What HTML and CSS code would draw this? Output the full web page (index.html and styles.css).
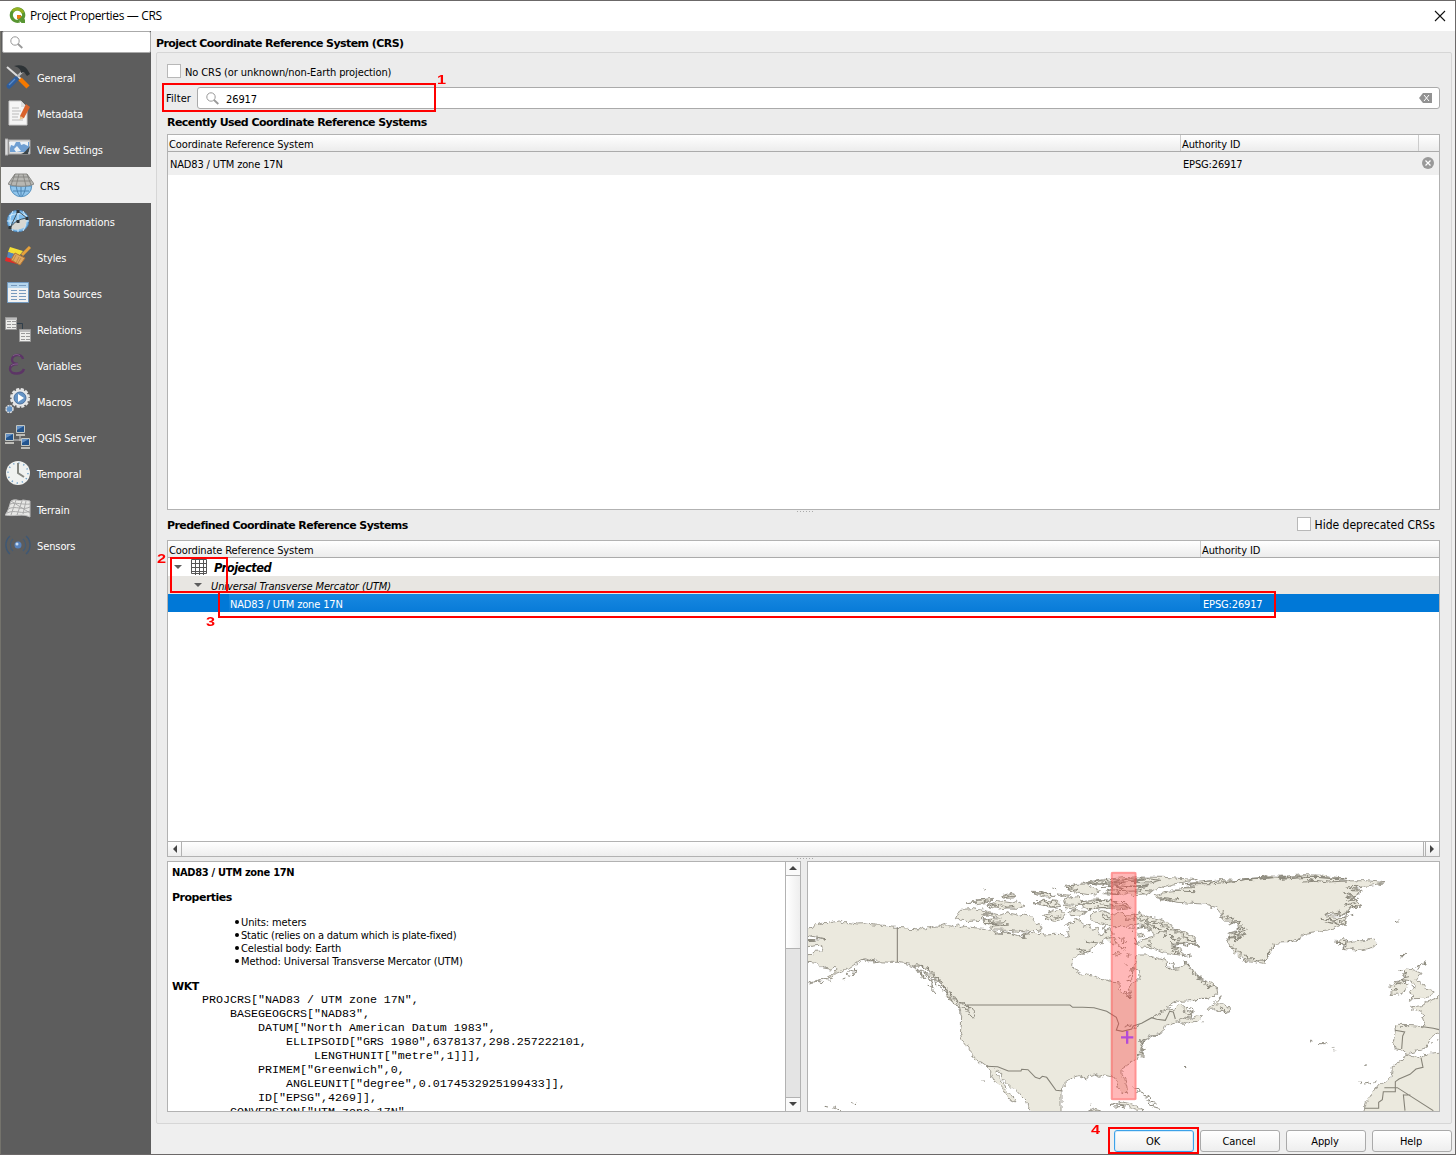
FILE: index.html
```html
<!DOCTYPE html>
<html lang="en">
<head>
<meta charset="utf-8">
<title>Project Properties — CRS</title>
<link rel="stylesheet" href="styles.css">
</head>
<body>
<div class="window">
  <header class="titlebar">
    <svg class="logo" width="17" height="17" viewBox="0 0 17 17"><path d="M13.7 11.5A6.2 6.2 0 1 0 10.5 14" fill="none" stroke="#589632" stroke-width="3.2"/><path d="M3.500 4A6.2 6.2 0 0 1 13.9 6" fill="none" stroke="#93b023" stroke-width="2.8"/><path d="M8 8h3.5l4.5 4.6V16h-3.4L8 11.4z" fill="#589632"/><path d="M8 8h3l1.6 1.8-3 2.5L8 11z" fill="#ee7913"/></svg>
    <span class="caption">Project Properties — CRS</span>
    <svg class="close" width="12" height="12" viewBox="0 0 12 12"><path d="M1 1l10 10M11 1L1 11" stroke="#111" stroke-width="1.1"/></svg>
  </header>
  <div class="body">
    <nav class="sidebar">
      <div class="search"><svg width="13" height="13" viewBox="0 0 13 13" fill="none" stroke="#999"><circle cx="5" cy="5" r="4.2"/><path d="M8 8l4.3 4" stroke-width="1.8"/></svg></div>
      <div class="item"><svg class="ico" viewBox="0 0 26 26"><path d="M2 3l15 13" stroke="#ddd" stroke-width="2"/><path d="M18 7L9 16" stroke="#bbb" stroke-width="2.4"/><path d="M11 15l-7 7" stroke="#2f5d9b" stroke-width="5" stroke-linecap="round"/><path d="M10 15l-6 6" stroke="#5b8cc9" stroke-width="1.300"/><path d="M15 15l8 8" stroke="#f57900" stroke-width="4.5"/><path d="M9 2c6-2 11 0 13 3l3 5-3 2-3-4-3 1c0-4-3-6-7-7z" fill="#2d3336"/></svg><span>General</span></div>
      <div class="item"><svg class="ico" viewBox="0 0 26 26"><path d="M4 1h12l6 6v18H4z" fill="#f5f5f5" stroke="#ccc"/><path d="M16 1v6h5" fill="#ddd"/><path d="M7 8h7M7 11h9M7 14h7M7 17h6M7 20h11" stroke="#bbb"/><path d="M15 16l6-12 4 3-6 11-4 1z" fill="#d9622b"/><path d="M14.500 20l1-4 3 2z" fill="#eac68f"/></svg><span>Metadata</span></div>
      <div class="item"><svg class="ico" viewBox="0 0 26 26"><path d="M0 3h3v16H0zM4 4h21v14H4z" fill="#ddd" stroke="#aaa"/><path d="M5 6h19v10H5z" fill="#6f9fd2"/><path d="M4 6h7l-2 4-3-1-1 3zM9 13l3-3 4 5-5 1zM15 6h8v4l-4-2-3 1z" fill="#edf3f8"/><path d="M25 10l-2 8h-7c4-1 6-5 9-8z" fill="#3d4548"/></svg><span>View Settings</span></div>
      <div class="item active"><svg class="ico" viewBox="0 0 26 26"><circle cx="13" cy="14" r="10.7" fill="#8fc5ed" stroke="#5590bd"/><path d="M3 14h20M5 19h16M13 14v10M8 13c1 6 2 9 4 11M18 13c-1 6-2 9-4 11" stroke="#4c83b0" fill="none"/><path d="M7 2h12l7 10c-5 3-20 3-26 0z" fill="#b7b7b3" stroke="#8b8b88"/><path d="M5 5h16M3 9h20M11 2l-3 12M15 2l3 12M7 2L3 13M19 2l4 11" stroke="#7f7f7b" stroke-width=".8" fill="none"/></svg><span>CRS</span></div>
      <div class="item"><svg class="ico" viewBox="0 0 26 26"><circle cx="13" cy="13" r="10.800" fill="#7fbdec" stroke="#4b81b3"/><path d="M4 8c6-3 12-3 18 0M2 13h22M13 2v22M8 3c-4 7-4 13 0 20M18 3c4 7 4 13 0 20" stroke="#d5ecfb" fill="none"/><path d="M5 20C9 14 14 11 22 11l-2 8c-5 3-10 4-15 1z" fill="#d7d7d2"/><path d="M5 20C9 14 14 11 22 10M13 3L5 20M13 3l9 7" stroke="#30373b" stroke-width=".8" fill="none"/><path d="M11.500 2h3v3h-3zM20.500 9h3v3h-3zM3.500 18h3v3h-3zM11.500 12h3v3h-3z" fill="#30373b"/></svg><span>Transformations</span></div>
      <div class="item"><svg class="ico" viewBox="0 0 26 26"><path d="M5 3l13 4-4 5L3 8z" fill="#f5df35"/><path d="M3 8l10 3-3 6-8-3z" fill="#5585bc"/><path d="M1 13l9 3 2 4-12-3z" fill="#e52828"/><path d="M10 9l10 5-5 7-9-5z" fill="#dfa860" stroke="#b37635"/><path d="M17 11l8-8" stroke="#e6a13b" stroke-width="3"/><path d="M11 11l-3 6M14 13l-3 6M16 14l-3 5" stroke="#b98044" stroke-width=".8"/></svg><span>Styles</span></div>
      <div class="item"><svg class="ico" viewBox="0 0 26 26"><path d="M2.500 2.500h21v20h-21z" fill="#f1f1f1" stroke="#739ac0"/><path d="M3 3h20v5H3z" fill="#b5d5ed"/><path d="M6 5.500h6M14 5.500h7M6 10.500h6M14 10.500h7M6 13.500h6M14 13.500h7M6 16.500h6M14 16.500h7M6 19.500h6M14 19.500h7" stroke="#7699bd"/></svg><span>Data Sources</span></div>
      <div class="item"><svg class="ico" viewBox="0 0 26 26"><path d="M12 7.500h5.500V14" fill="none" stroke="#303f4b"/><path d="M.5 1.500h11v12H.5zM14.500 13.500h11v12h-11z" fill="#ededeb" stroke="#999"/><path d="M1 3h11M15 15h10" stroke="#bbb" stroke-width="2"/><path d="M2 5.500h4M7 5.500h4M2 8.500h4M7 8.500h4M2 11.500h4M7 11.500h4M16 17.500h4M21 17.500h4M16 20.500h4M21 20.500h4M16 23.500h4M21 23.500h4" stroke="#999"/></svg><span>Relations</span></div>
      <div class="item"><svg class="ico" viewBox="0 0 26 26"><path d="M18 7c-1-6-11-5-11 1 0 3 3 4 6 4-5 0-8 2-8 5 0 6 12 6 14 0" fill="none" stroke="#5c3566" stroke-width="2.4"/><path d="M8 4c2-2 5-2 7 0M6 14c2-2 4-2 7-2" fill="none" stroke="#8b6a93" stroke-width=".8"/></svg><span>Variables</span></div>
      <div class="item"><svg class="ico" viewBox="0 0 26 26"><circle cx="15" cy="10" r="8.500" fill="#eee" stroke="#e5e5e5" stroke-width="3" stroke-dasharray="3 1.500"/><circle cx="15" cy="10" r="6" fill="#6594c6" stroke="#4a6f9c"/><path d="M13 6l6 4-6 4z" fill="#fff"/><circle cx="4.500" cy="21" r="3.500" fill="#6594c6" stroke="#ddd" stroke-width="1.500" stroke-dasharray="2 .8"/></svg><span>Macros</span></div>
      <div class="item"><svg class="ico" viewBox="0 0 26 26"><path d="M15 10v7M8 16h10" stroke="#ccc"/><g fill="#23558f" stroke="#c3c7c3"><path d="M11.500 1.500h8v7h-8zM.5 9.500h8v7h-8zM16.500 14.500h8v7h-8z"/></g><path d="M12 2h7l-7 4zM1 10h7l-7 4zM17 15h7l-7 4z" fill="#6591c5"/><path d="M11 11h9M0 19h9M16 24h9" stroke="#bdbdb8" stroke-width="2"/></svg><span>QGIS Server</span></div>
      <div class="item"><svg class="ico" viewBox="0 0 26 26"><circle cx="13" cy="13" r="12" fill="#f0f2f0"/><circle cx="13" cy="13" r="10" fill="none" stroke="#6fa0c8" stroke-width="1.500" stroke-dasharray="1.300 3.936"/><path d="M13 3v10l6 4" fill="none" stroke="#858781" stroke-width="2"/></svg><span>Temporal</span></div>
      <div class="item"><svg class="ico" viewBox="0 0 26 26"><path d="M6 5c5-3 8 1 12-1l7 1v16c-8-4-15 0-25-2 4-5 4-9 6-14z" fill="#e7e7e5" stroke="#bbb"/><path d="M3 13c8-4 14 2 22-2M2 17c8-4 15 2 23-2M5 8c6-2 13 1 20 0M11 4L6 19M17 5l-5 14M21 5l-3 13M6 5l19 12" fill="none" stroke="#aaa"/></svg><span>Terrain</span></div>
      <div class="item"><svg class="ico" viewBox="0 0 26 26"><circle cx="13" cy="13" r="3.500" fill="#5682bd"/><circle cx="12" cy="12" r="1.500" fill="#c5daf0"/><path d="M8 7a8 8 0 0 0 0 12M18 7a8 8 0 0 1 0 12" fill="none" stroke="#445c75" stroke-width="1.300"/><path d="M5 4a12 12 0 0 0 0 18M21 4a12 12 0 0 1 0 18" fill="none" stroke="#3f5874" stroke-width="1.500"/></svg><span>Sensors</span></div>
    </nav>
    <main class="content">
      <h1 class="heading page-title"><span>Project Coordinate Reference System (CRS)</span></h1>
      <section class="group">
        <label class="check"><i class="box"></i><span class="t-nocrs">No CRS (or unknown/non-Earth projection)</span></label>
        <div class="filter">
          <span class="t-filter">Filter</span>
          <div class="input"><svg width="13" height="13" viewBox="0 0 13 13" fill="none" stroke="#999"><circle cx="5" cy="5" r="4.200"/><path d="M8 8l4.300 4" stroke-width="1.800"/></svg><span class="t-num">26917</span><svg class="clear" width="13" height="10" viewBox="0 0 13 10"><path d="M0 5l4-5h9v10H4z" fill="#929292"/><path d="M5 2l5 6M10 2L5 8" stroke="#fff"/></svg></div>
        </div>
        <h2 class="heading recent"><span>Recently Used Coordinate Reference Systems</span></h2>
        <div class="table recent-table">
          <div class="thead"><div><span>Coordinate Reference System</span></div><div><span>Authority ID</span></div><div></div></div>
          <div class="trow"><div><span class="t-nad">NAD83 / UTM zone 17N</span></div><div><span class="t-epsg">EPSG:26917</span></div><div class="remove"><svg width="12" height="12" viewBox="0 0 12 12"><circle cx="6" cy="6" r="6" fill="#999"/><path d="M3.500 3.500l5 5m0-5l-5 5" stroke="#fff" stroke-width="1.200"/></svg></div></div>
        </div>
        <div class="grip"></div>
        <div class="predef"><h2 class="heading"><span>Predefined Coordinate Reference Systems</span></h2><label class="check"><i class="box"></i><span>Hide deprecated CRSs</span></label></div>
        <div class="table tree">
          <div class="thead"><div><span>Coordinate Reference System</span></div><div><span>Authority ID</span></div></div>
          <div class="node projected"><i class="arrow"></i><svg width="16" height="16" viewBox="0 0 16 16"><path d="M.5 .5h15v14H.5zM4.500 0v16M8.500 0v16M12.500 0v16M0 4.500h16M0 8.500h16M0 12.500h16" fill="none" stroke="#555"/></svg><b class="t-proj">Projected</b></div>
          <div class="node utm"><i class="arrow"></i><em>Universal Transverse Mercator (UTM)</em></div>
          <div class="node selected"><div><span class="t-nad">NAD83 / UTM zone 17N</span></div><div><span class="t-epsg">EPSG:26917</span></div></div>
          <div class="blank"></div>
          <div class="hscroll"><span><i class="left"></i></span><span><i class="right"></i></span></div>
        </div>
        <div class="grip low"></div>
        <div class="details">
          <div class="info">
            <div class="doc">
              <h3 class="crs-name"><span>NAD83 / UTM zone 17N</span></h3>
              <h3><span>Properties</span></h3>
              <ul><li><span>Units: meters</span></li><li><span class="t-static">Static (relies on a datum which is plate-fixed)</span></li><li><span>Celestial body: Earth</span></li><li><span>Method: Universal Transverse Mercator (UTM)</span></li></ul>
              <h3><span>WKT</span></h3>
<pre>PROJCRS["NAD83 / UTM zone 17N",
    BASEGEOGCRS["NAD83",
        DATUM["North American Datum 1983",
            ELLIPSOID["GRS 1980",6378137,298.257222101,
                LENGTHUNIT["metre",1]]],
        PRIMEM["Greenwich",0,
            ANGLEUNIT["degree",0.0174532925199433]],
        ID["EPSG",4269]],
    CONVERSION["UTM zone 17N",</pre>
            </div>
            <div class="vscroll"><span><i class="up"></i></span><b></b><span><i class="down"></i></span></div>
          </div>
          <svg class="map" viewBox="24 21 1893 747" preserveAspectRatio="none">
            <defs><filter id="rugged" x="0" y="0" width="1940" height="790" filterUnits="userSpaceOnUse"><feTurbulence type="fractalNoise" baseFrequency=".07" numOctaves="2" seed="4"/><feDisplacementMap in="SourceGraphic" scale="17" xChannelSelector="R" yChannelSelector="G"/></filter></defs>
            <g filter="url(#rugged)">
            <g class="land">
              <path d="M4 225L38 220 45 210 65 205 85 206 104 200 118 198 126 203 150 203 172 207 196 206 220 210 250 211 275 216 292 217 320 219 330 224 345 223 352 229 360 218 375 222 385 215 395 219 408 213 422 214 440 207 450 217 458 211 461 219 476 207 480 218 494 214 520 218 550 220 577 227 588 232 582 238 610 235 640 236 655 242 672 248 668 235 690 232 710 236 725 235 735 240 765 238 788 239 797 247 808 244 800 230 808 220 800 207 818 202 829 191 848 202 850 214 868 208 874 226 890 220 902 243 918 226 932 220 940 235 925 248 910 250 906 262 892 269 877 280 865 291 848 296 829 303 817 318 815 331 824 341 835 346 839 361 862 357 882 362 905 373 932 379 957 380 958 403 968 414 978 419 985 429 993 416 987 400 990 384 1010 378 1020 366 1019 350 1001 343 1005 325 1008 300 1040 300 1065 308 1082 313 1098 316 1100 335 1118 345 1139 340 1155 321 1170 335 1182 348 1192 366 1208 374 1222 380 1237 387 1251 403 1253 415 1240 424 1210 431 1162 438 1132 439 1100 460 1060 485 1090 464 1122 460 1147 447 1160 457 1149 472 1167 473 1177 485 1157 489 1140 498 1118 504 1095 511 1092 524 1078 536 1060 539 1045 544 1031 558 1017 553 1024 563 1019 574 1031 583 1023 590 1033 603 1016 602 1011 615 984 629 966 642 966 658 975 674 981 696 980 715 969 716 955 699 949 680 943 667 927 663 913 660 900 664 883 657 868 662 860 672 838 662 818 668 800 681 787 693 783 710 783 788H698L680 740 665 725 650 708 630 695 615 680 602 665 602 652 588 642 590 660 603 673 612 689 622 709 632 724 642 728 648 742 631 734 619 720 607 698 592 686 582 679 570 654 558 631 545 622 525 613 518 595 505 581 488 560 481 536 484 510 485 483 478 454 448 434 440 425 444 411 432 398 420 383 406 372 395 362 381 344 366 333 343 334 324 327 292 322 270 322 242 320 225 314 213 318 196 311 181 315 164 327 148 338 130 346 111 354 94 367 70 373 48 380 4 388L50 377 80 369 101 357 111 344 102 337 90 342 70 339 60 334 50 325 31 323 4 318V300L39 298 45 289 66 288 70 278 60 271 4 277V257L49 256 75 251 45 246 4 238Z"/>
              <path d="M481 163L518 161 549 166 580 173 551 183 540 196 503 200 466 191ZM544 177L575 174 597 180 624 174 656 181 674 177 696 184 708 205 730 219 716 227 694 226 667 230 625 226 582 225 568 213 558 208 549 197 575 191 601 192 580 183Z"/>
              <path d="M498 144L536 136 578 130 566 142 530 146ZM560 150L592 137 638 144 650 139 675 153 657 160 621 159 599 162 570 156ZM605 122L637 115 650 121 640 129 616 130ZM694 109L724 110 768 124 736 126ZM708 145L734 136 776 139 783 154 756 157ZM774 117L812 121 804 127ZM795 94L831 88 859 87 898 107 887 120 849 117 823 112ZM849 82L937 71 1000 66 1094 67 1192 74 1134 84 1083 97 1052 110 1038 120 995 122 983 115 965 121 917 112 940 98 924 92 955 86 900 88ZM792 132L832 125 846 137 884 132 945 137 942 145 982 149 990 158 946 163 902 157 867 164 844 154 857 149 797 147ZM731 181L757 169 777 163 796 178 787 193 761 199 738 190ZM802 178L818 166 862 170 842 180 813 182ZM790 150L829 155 825 163 796 158ZM870 187L879 173 907 167 937 178 954 171 984 181 1019 174 1041 184 1076 192 1108 206 1122 222 1154 231 1189 250 1184 266 1157 265 1110 268 1136 280 1155 295 1144 302 1096 292 1060 279 1022 275 1006 265 1026 255 1056 247 1067 236 1049 228 1034 215 1011 207 978 215 938 215 908 205 880 201ZM917 248L928 260 948 268 976 285 961 273 945 258 937 244ZM938 296L955 289 964 296 947 303Z"/>
              <path d="M1065 122L1095 113 1139 108 1150 98 1181 93 1164 85 1211 80 1264 74 1327 77 1344 70 1378 69 1402 63 1456 64 1510 59 1572 61 1640 71 1607 78 1696 77 1755 83 1704 93 1668 96 1670 107 1683 111 1667 120 1660 133 1674 143 1682 156 1650 158 1640 173 1624 181 1573 178 1587 185 1632 188 1640 205 1620 211 1601 222 1520 234 1497 250 1460 263 1429 264 1411 291 1394 325 1367 320 1337 316 1312 299 1291 278 1281 250 1294 237 1316 232 1314 209 1297 199 1272 198 1267 181 1247 157 1214 147 1176 145 1131 142 1097 133 1068 128Z"/>
              <path d="M1607 259L1628 253 1642 262 1671 256 1681 257 1700 257 1714 250 1724 259 1731 267 1718 277 1696 282 1672 287 1648 282 1627 280 1640 270ZM1769 392L1779 387 1782 380 1807 378 1823 391 1817 406 1796 417 1770 419 1777 405ZM1803 376L1817 365 1807 354 1818 342 1839 344 1863 355 1848 374 1868 388 1877 403 1902 407 1898 422 1873 430 1839 431 1825 437 1842 420 1829 414 1838 401 1850 393 1839 384 1828 377 1812 374ZM1937 420L1896 433 1880 442 1865 452 1836 455 1835 461 1859 468 1870 483 1875 501 1869 515 1836 512 1795 511 1785 515 1786 530 1780 562 1786 582 1803 584 1820 597 1850 588 1871 583 1885 564 1894 546 1937 520ZM1937 589L1880 596 1863 608 1836 604 1820 597 1809 616 1791 624 1777 637 1774 664 1757 681 1736 688 1724 705 1710 727 1699 742 1685 787H1937Z"/>
              <path d="M1268 417L1256 430 1247 441 1219 464 1239 462 1256 471 1271 464 1275 475 1289 469 1287 455 1268 446 1250 447 1257 433ZM1138 498L1156 487 1175 490 1192 480 1210 483 1188 499 1160 505 1147 511ZM930 752L966 741 1002 748 1031 767 1005 765 981 751 949 747ZM866 767L880 760 902 765ZM1148 456L1156 477 1172 478 1175 472 1154 459ZM1010 237L1034 234 1037 244 1017 246Z"/>
            </g>
            <g class="coast">
              <path d="M24 257l20-2 10-7 21 3-9 5M341 334l8-5 15 2 9 9 10-2 5 11 10 4 5 14 13 1-1 8 9 5-3 9 13 2-2 8 12 3-6 9 14 2-1 9 13 4 7 14 12 2 2 8 12-3 5 9 13 2 10 17-5 10-10-3-3-16-12-8-12 1-8-12-15-3-3-14-12-6-10-20-9 2-4-12-12-5-3-13-10-3-11-17-12-1-4-8-10 1zM347 345l12 5 8 16 7 1M372 353l13 11 2 10 10 4M383 391l9 2 3 9 10 12M444 431l21 2 11 11 15-1 13 16-4 10M139 359l10-12 10 4 8-8-2 12-12 7zM170 329l12-7 5-10 17 6 9-4 8 10 14-3"/>
              <path d="M501 144l30-1-7-8 38-2-14 8 18-4M565 151l15-5 11 11 13-9 14 9 25-3M572 145l12 2M608 125l17-6 15 5M567 155l20-6-10-6 15 6M611 129l21-5 14 0M695 112l35 4-8-7 41 13M699 143l21 1 10-8 15 8 12-6 15 8-15 8-12-7-15 5M736 147l9 9 13-3 14 3M797 97l20 3-7-8 13 0-3 14 14-4M857 84l42 3 55-6 22 3-8-9 24-4 37 4M860 85l40-8 25 3-11-7 46 2-23 7 75-2M990 78l44-3-20-8 68 9-30 8-65-2M920 106l52-3-24-8 92-2-34 12 50 3M907 98l55-8 40 4 44-5-30 6M911 116l50 3-11-9 52-2 35 10M867 161l63-5 52-1M839 140l66-4 72 4M842 147l45-2 57 7M906 181l6 12 9 4 8-3-6-14zM740 188l15-6 14 6 15-5M553 206l40-1-18 8 51-3-46-5M548 193l35 9 37-2M582 235l39-4 24 8M653 237l10 9 4-9 9 13-4-14 17 2"/>
              <path d="M971 178l12 14-8 4 24-1 7-17 7 15 14-10-5 16 24-8-7 10 30-3-11 8 32-2-9 8 27 1-7 10 31 3-9 8 25-1-2 12 21 3-8 9 31-1-14 9 21 8-29-6-10 8-6-11-22 1 12-13-31-2 11-8-27-1 8-11-29 1 10-10-26-1 8-8-25 1 4-10-16 5M1010 219l25-6 14 8-5 9M1026 237l6 9-10-3M1048 254l10 12-17 1 14 9M1110 262l18 11-14 4 20 4-16 7 21 3-11 5 30 0-12 10 27-6M951 243l10 13 12-5-3 12 14-3M986 219l10 12 4-16M829 282l29 4-23 7M855 259l40 5M849 298l17-9 14 3M1005 247l7 15M921 235l-10-13 2-9"/>
              <path d="M980 298l6-1 2 7-6 2M977 329l5 2M991 349l8-10-2 19M984 367l8-6 6 7-8 5M982 378l12-3M969 411l10-4 1 12 8-8-2 18 7-7M978 427l18-4M1151 320l10 12 7-1 0 10 12 1-3 13 14 7-1 8 18 2-3 8 13-1-4 13 13-3 2 10 19-8 5 12M1107 326l11-7 3 21 12-2M1098 335l12 2-3 7"/>
              <path d="M1160 456l17 4 3 14-12 4M1175 438l33-8 20 2M1256 470l6-14 8 13 6-10-3 15M1017 559l18-6-13 14 14-7-15 15 9-2-5 13 12-3M1011 599l20-3-17-7M1030 558l15-8 11-7 18-2 13-8"/>
              <path d="M1072 125l43 6-33 4 55-4-20 11M1120 108l66 2M1136 99l48-1M1155 86l83 0 68-6M1210 80l52-5 15 5 80-8-31 0 90-5-38 5 92-9-31 8 116-5-60 0M1336 72l120-6-8 7 82-8M1443 64l197 6-44 1-69-6M1509 81l35-2-20-5 62 7 62-4M1637 96l53-3M1641 100l36 2-22 5 32 2M1630 112l28 8-21 8 31-4-19 10 28-5M1639 137l24-6 4 11-34 8 37 2-18 7 29-4M1571 178l49-7-9 11 33-10-15 16 31-10M1565 190l48 7-31-6 33 16-41-7 46 10 19-9-28-6M1270 165l-2 11-10 2 8 11 23-11-9 14 21-2-8 12 29-3-12 12 20-2-17 13 22-3-23 13 24-6-18 14 22-4-32 13 17-2-23 10 15-1M1281 210l14-7 20 2M1280 236l30-8-6 15 14-4-35 10 33-2M1288 272l13 1-6 8 17-3-3 13 14-1 0 12 16-2 1 12 18-1 10 9 22-6 4 7 12-20-1-13 15-10-1-12"/>
              <path d="M1460 264l15-8 10 6 13-10M1608 262l18 1-11 7 29-7-14-7 15-2-8 9M1630 269l8 13M1800 300l14-2-8 9zM1788 200l10-3M1797 349l13-7 3 8-8 8 14-3-6 13 14-3M1848 337l14-7-9 14M1865 326l10-11-2 13zM1782 391l14-7 6-8 16 1-5 10M1770 404l20-1-10 8M1835 390l9 8M1787 383l22 5"/>
              <path d="M153 743l5 1M168 743l-3 5M74 754l10 2M98 758l9 3 14 6M128 372l8-3M53 380l15 3M80 377l12 3M360 357l12 5-3 8 13 0 2 8 14 3-5 10 12 8M1530 554l4 5M1557 566l17 0M1577 563l6 4M1594 575l6 2M1601 583l3 3M1690 632l10-3M1680 679l4 9M1692 684l14-2M1704 681l9 6M1722 687l7-10M1894 563l5 1M1911 556l4-3M872 748l2 3M1152 637l4 1M1207 506l4-3M1001 698l19 4-7 8 20 4-3 9 19 5-2 8 17 6M1039 733l11 16 17-2M1055 755l25 5M942 756l31-2-7 7 12-5M535 620l3 5M546 622l-4 4M548 674l4 2M550 102l5 1M757 99l10 2M1004 520l15-10M974 516l20-7"/>
            </g>
            </g>
            <path class="border" d="M292 217V322M500 450H810L818 457 848 457 882 458 920 469 949 487 956 506 949 525 967 529 995 522 1000 513 1025 505 1055 488 1070 493 1096 496 1109 469 1120 471 1126 492M558 634L593 635 625 648 663 648 665 643 684 644 706 667 719 671 727 664 740 667 768 706 788 708M1869 515L1900 520 1917 524M1785 526L1814 531 1808 543 1805 582M1863 608L1869 637 1848 642 1830 658 1797 672 1786 680V710H1750L1747 734 1736 742V760H1692M1753 698H1792L1900 767M1810 718L1815 767M1810 720H1831"/>
            <rect class="zone" x="932" y="50" width="78" height="686" rx="6"/>
            <rect class="zone-line" x="936" y="54" width="70" height="678"/>
            <path class="cross" d="M963 547H1000M981.500 528V566"/>
          </svg>
        </div>
      </section>
      <footer class="buttons"><button class="ok">OK</button><button>Cancel</button><button>Apply</button><button>Help</button></footer>
    </main>
  </div>
  <div class="mark m1"></div><b class="num n1">1</b>
  <div class="mark m2"></div><b class="num n2">2</b>
  <div class="mark m3"></div><b class="num n3">3</b>
  <div class="mark m4"></div><b class="num n4">4</b>
</div>
</body>
</html>
```
FILE: styles.css
```css
* { box-sizing: border-box; }
body { margin: 0; overflow: hidden; background: #efefef; color: #000; font: 11px/13px "DejaVu Sans Condensed", "DejaVu Sans", sans-serif; font-stretch: condensed; letter-spacing: -.1px; }
h1, h2, h3, ul, pre { margin: 0; padding: 0; font-size: 11px; }
svg { display: block; flex: none; }
span, b, em { white-space: nowrap; }
.window { position: relative; width: 1456px; height: 1155px; display: flex; flex-direction: column; border: solid #6b6868; border-width: 1px 1px 1px 0; }
.titlebar { height: 30px; flex: none; display: flex; align-items: center; background: #fff; padding: 0 9px; }
.logo { margin-top: -1px; }
.caption { font: 12px/16px "Open Sans", sans-serif; margin-left: 4px; letter-spacing: -.35px; }
.close { margin-left: auto; margin-top: -1px; }
.body { flex: 1; display: flex; min-height: 0; }
.sidebar { width: 151px; background: #5d5d5d; border-left: 1px solid #74736c; flex: none; }
.search { height: 22px; margin: 0 0 6px 1px; background: #fff; border: 1px solid #aaa; border-radius: 2px; padding: 4px 7px; }
.item { height: 36px; display: flex; align-items: center; padding: 2px 0 0 4px; color: #fff; }
.item span { margin-left: 6px; }
.item.active { background: #efefef; color: #000; padding-left: 7px; }
.ico { width: 26px; height: 26px; margin-top: -3px; }
.content { flex: 1; min-width: 0; padding: 0 3px 0 5px; display: flex; flex-direction: column; }
.heading, .doc h3, .t-proj { font-family: "DejaVu Sans", sans-serif; font-stretch: normal; font-weight: bold; letter-spacing: -.57px; }
.page-title { height: 21px; line-height: 25px; }
.group { height: 1072px; flex: none; border: 1px solid #d6d6d6; border-radius: 2px; background: #ececec; padding: 11px 11px 0 10px; display: flex; flex-direction: column; }
.check { display: flex; align-items: center; height: 14px; gap: 4px; }
.check span { padding-top: 2px; }
.box { width: 14px; height: 14px; border: 1px solid #b8b8b8; background: #fff; }
.filter { display: flex; align-items: center; height: 22px; margin-top: 9px; margin-left: -1px; }
.t-filter { width: 31px; padding-top: 1px; letter-spacing: .1px; }
.input { flex: 1; height: 22px; border: 1px solid #aaa; border-radius: 3px; background: #fff; display: flex; align-items: center; padding: 1px 7px 0 8px; }
.input span { margin-left: 7px; padding-top: 2px; }
.clear { margin: -1px 0 0 auto; }
.recent { height: 25px; line-height: 27px; }
.table { background: #fff; border: 1px solid #b2b2b2; display: flex; flex-direction: column; }
.recent-table { height: 376px; flex: none; }
.thead { height: 17px; flex: none; display: grid; line-height: 19px; background: linear-gradient(#fff, #ececec); border-bottom: 1px solid #ababab; }
.thead div { padding-left: 1px; height: 16px; }
.thead div + div { border-left: 1px solid #ccc; }
.recent-table .thead, .trow { grid-template-columns: 1012px 238px 1fr; }
.trow { display: grid; height: 23px; align-items: center; background: #efefef; padding-left: 2px; line-height: 15px; }
.t-nad, .t-epsg { letter-spacing: -.15px; }
.trow > div { padding-top: 2px; }
.trow > div + div { padding-left: 1px; }
.trow > .remove { margin-left: 2px; padding: 0; margin-top: -1px; }
.grip { height: 3px; width: 17px; margin: 0 auto 0 629px; flex: none; background: radial-gradient(circle, #aaa .7px, transparent .8px) 0 0/3px 3px; }
.grip.low { height: 4px; }
.predef { height: 27px; flex: none; display: flex; justify-content: space-between; align-items: flex-start; padding: 5px 5px 0 0; }
.predef .heading { line-height: 15px; }
.predef .check { font-size: 12px; letter-spacing: 0; margin-top: -1px; }
.tree { height: 317px; flex: none; }
.tree .thead { grid-template-columns: 1032px 1fr; }
.node { height: 18px; flex: none; display: flex; align-items: center; }
.arrow, .left, .right, .up, .down { width: 0; height: 0; border: 4px solid transparent; }
.arrow { border-top-color: #5d5d5d; border-bottom: 0; }
.projected { padding-left: 6px; }
.projected svg { margin: 0 7px 0 9px; }
.t-proj { font-style: italic; font-size: 11.5px; padding-top: 3px; letter-spacing: -.5px; }
.utm { background: #e8e6e2; padding-left: 26px; }
.utm em { margin-left: 9px; padding-top: 3px; }
.selected { background: #0078d7; color: #fff; display: grid; grid-template-columns: 971px 1fr; padding-left: 61px; }
.selected > div { height: 18px; line-height: 21px; padding-left: 1px; }
.selected > div:first-child { background: linear-gradient(#1888e0, #087bd8); }
.selected > div + div { padding-left: 3px; }
.blank { flex: 1; }
.hscroll { height: 15px; display: flex; justify-content: space-between; border-top: 1px solid #b2b2b2; background: linear-gradient(#fff, #eee); }
.hscroll span { width: 14px; border-right: 1px solid #b2b2b2; padding: 3px 0 0 1px; }
.hscroll span + span { border-right: 0; border-left: 3px double #b2b2b2; width: 16px; padding-left: 4px; }
.left { display: block; border-left: 0; border-right-color: #444; margin-left: 4px; }
.right { display: block; border-right: 0; border-left-color: #444; }
.details { height: 251px; flex: none; display: grid; grid-template-columns: 634px 633px; gap: 6px; }
.info { display: flex; background: #fff; border: 1px solid #b2b2b2; overflow: hidden; }
.doc { flex: 1; height: 249px; overflow: hidden; padding: 4px 0 0 4px; }
.doc h3 { height: 13px; margin-bottom: 12px; letter-spacing: -.5px; }
.doc .crs-name { font-family: "DejaVu Sans Condensed", "DejaVu Sans", sans-serif; font-stretch: condensed; letter-spacing: -.3px; }
.doc ul { list-style: none; margin: 0 0 12px 64px; }
.doc li { height: 13px; display: flex; }
.doc li::before { content: ""; width: 4px; height: 4px; background: #000; border-radius: 50%; margin: 4px 2px 0 -1px; }
.t-static { letter-spacing: -.2px; }
.doc h3:nth-of-type(3) { margin-bottom: 0; }
.doc pre { font: 11.670px/14px "Liberation Mono", monospace; letter-spacing: 0; margin-left: 30px; }
.vscroll { width: 15px; border-left: 1px solid #b2b2b2; background: #e4e4e4; display: flex; flex-direction: column; }
.vscroll span { height: 13px; background: #fafafa; padding: 4px 0 0 3px; }
.vscroll b { height: 74px; border: solid #b2b2b2; border-width: 1px 0; background: linear-gradient(90deg, #fff, #eee); margin-bottom: auto; }
.vscroll span:last-child { border-top: 1px solid #b2b2b2; height: 14px; }
.up { display: block; border-top: 0; border-bottom-color: #444; }
.down { display: block; border-bottom: 0; border-top-color: #444; }
.map { width: 633px; height: 251px; background: #fff; border: 1px solid #b2b2b2; }
.land { fill: #ebe9de; stroke: #98958a; stroke-width: 2.8; stroke-linejoin: round; }
.coast { fill: none; stroke: #8c897d; stroke-width: 3; }
.border { fill: none; stroke: #858277; stroke-width: 3.2; }
.zone { fill: #ff3b3b; fill-opacity: .36; }
.zone-line { fill: none; stroke: #ff3b3b; stroke-opacity: .3; stroke-width: 5; }
.cross { stroke: #b34bd8; stroke-width: 7; }
.buttons { display: flex; justify-content: flex-end; gap: 6px; margin: 6px 0 0; }
.buttons button { width: 80px; height: 22px; padding: 1px 2px 0 0; border: 1px solid #aaa; border-radius: 3px; background: linear-gradient(#fff, #eee); font: inherit; letter-spacing: inherit; color: #000; }
.buttons .ok { border-color: #3ca2e8; box-shadow: inset 0 0 0 1px #d6ebfa; }
.mark { position: absolute; border: 2px solid #f00; }
.num { position: absolute; color: #f00; font: bold 13px/14px "Liberation Sans", sans-serif; letter-spacing: 0; transform: scaleX(1.25); transform-origin: 0 0; }
.m1 { left: 162px; top: 82px; width: 274px; height: 29px; }
.m2 { left: 170px; top: 556px; width: 58px; height: 36px; }
.m3 { left: 218px; top: 590px; width: 1058px; height: 27px; }
.m4 { left: 1108px; top: 1126px; width: 91px; height: 27px; }
.n1 { left: 437px; top: 72px; }
.n2 { left: 157px; top: 551px; }
.n3 { left: 206px; top: 614px; }
.n4 { left: 1091px; top: 1122px; }
```
